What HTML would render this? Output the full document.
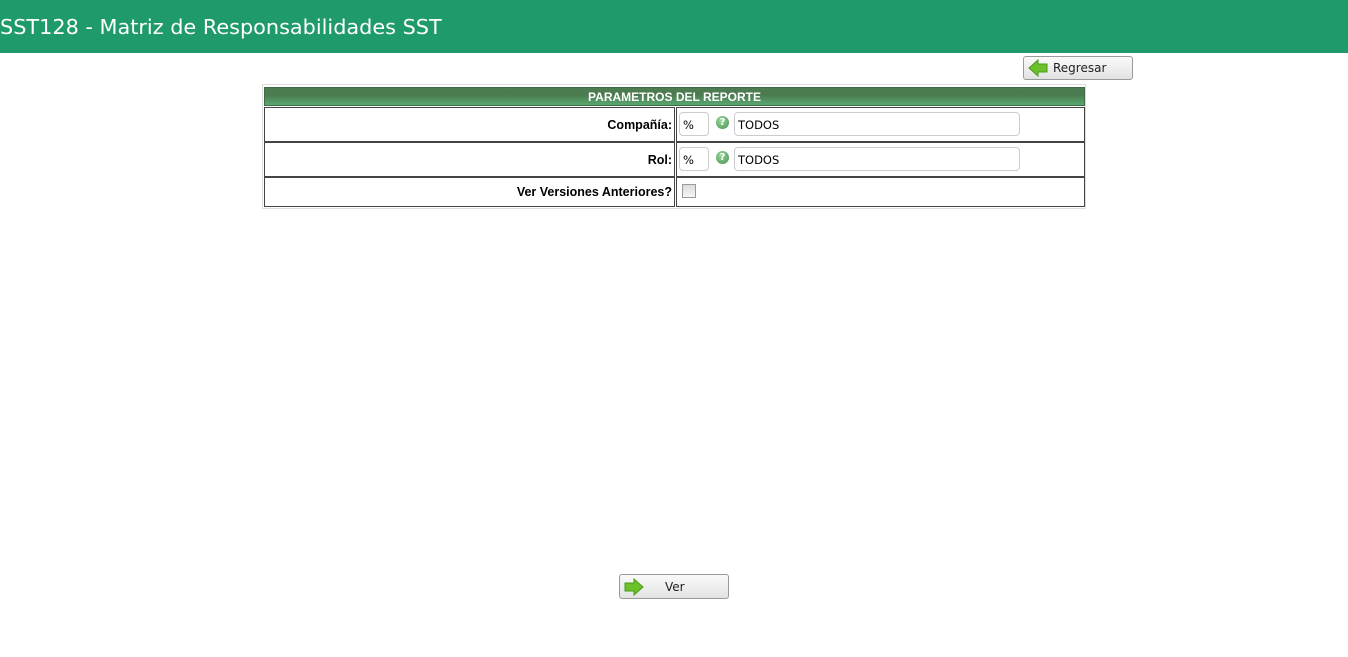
<!DOCTYPE html>
<html><head><style>
body{margin:0;width:1348px;height:657px;background:#fff;font-family:"DejaVu Sans","Liberation Sans",sans-serif;position:relative;overflow:hidden}
.hdr{position:absolute;left:0;top:0;width:1348px;height:53px;background:#1f9b6b;color:#fff;font-size:20.8px;line-height:55px;padding-left:0}
.abs{position:absolute;box-sizing:border-box}
.btn{border:1px solid #9a9a9a;border-radius:3px;background:linear-gradient(#fafafa,#e2e2e2);font-size:12px;color:#222}
.cell{border:1px solid #444}
.lbl{font-weight:bold;font-size:12.5px;text-align:right;color:#000;font-family:"Liberation Sans",sans-serif}
.inp{border:1px solid #ccc;border-radius:4px;font-size:11.5px;padding-left:3px;line-height:24px;background:#fff}
.help{width:13px;height:13px;border-radius:50%;background:radial-gradient(circle at 40% 35%,#9fd9a0,#3e8e4c);color:#fff;font-size:10px;font-weight:bold;text-align:center;line-height:13px}
</style></head><body>
<div class="hdr">SST128 - Matriz de Responsabilidades SST</div>

<div class="abs btn" style="left:1023px;top:56px;width:110px;height:24px">
<svg class="abs" style="left:4px;top:2px" width="20" height="18" viewBox="0 0 20 18"><path d="M1 9 L10 1 L10 5 L19 5 L19 13 L10 13 L10 17 Z" fill="#6cc12a" stroke="#4a9a18" stroke-width="1"/></svg>
<span class="abs" style="left:29px;top:4px">Regresar</span></div>

<div class="abs" style="left:262px;top:84px;width:824px;height:125px;border:1px solid #ddd"></div>
<div class="abs" style="left:264px;top:87px;width:821px;height:19px;background:linear-gradient(#4e7d52,#4c7a50 40%,#58a870);border:1px solid #3f6a45;color:#fff;font-weight:bold;font-size:12px;text-align:center;line-height:18px;font-family:'Liberation Sans',sans-serif">PARAMETROS DEL REPORTE</div>

<div class="abs cell lbl" style="left:264px;top:107px;width:411px;height:35px;line-height:35px;padding-right:2px">Compañía:</div>
<div class="abs cell" style="left:676px;top:107px;width:409px;height:35px"></div>
<div class="abs inp" style="left:679px;top:112px;width:30px;height:24px">%</div>
<div class="abs help" style="left:716px;top:116px">?</div>
<div class="abs inp" style="left:734px;top:112px;width:286px;height:24px">TODOS</div>

<div class="abs cell lbl" style="left:264px;top:142px;width:411px;height:35px;line-height:35px;padding-right:2px">Rol:</div>
<div class="abs cell" style="left:676px;top:142px;width:409px;height:35px"></div>
<div class="abs inp" style="left:679px;top:147px;width:30px;height:24px">%</div>
<div class="abs help" style="left:716px;top:151px">?</div>
<div class="abs inp" style="left:734px;top:147px;width:286px;height:24px">TODOS</div>

<div class="abs cell lbl" style="left:264px;top:177px;width:411px;height:30px;line-height:29px;padding-right:2px">Ver Versiones Anteriores?</div>
<div class="abs cell" style="left:676px;top:177px;width:409px;height:30px"></div>
<div class="abs" style="left:682px;top:184px;width:14px;height:14px;border:1px solid #999;background:linear-gradient(#ddd,#f6f6f6)"></div>

<div class="abs btn" style="left:619px;top:574px;width:110px;height:25px">
<svg class="abs" style="left:4px;top:3px" width="20" height="18" viewBox="0 0 20 18"><path d="M19 9 L10 1 L10 5 L1 5 L1 13 L10 13 L10 17 Z" fill="#6cc12a" stroke="#4a9a18" stroke-width="1"/></svg>
<span class="abs" style="left:45px;top:5px">Ver</span></div>
</body></html>
